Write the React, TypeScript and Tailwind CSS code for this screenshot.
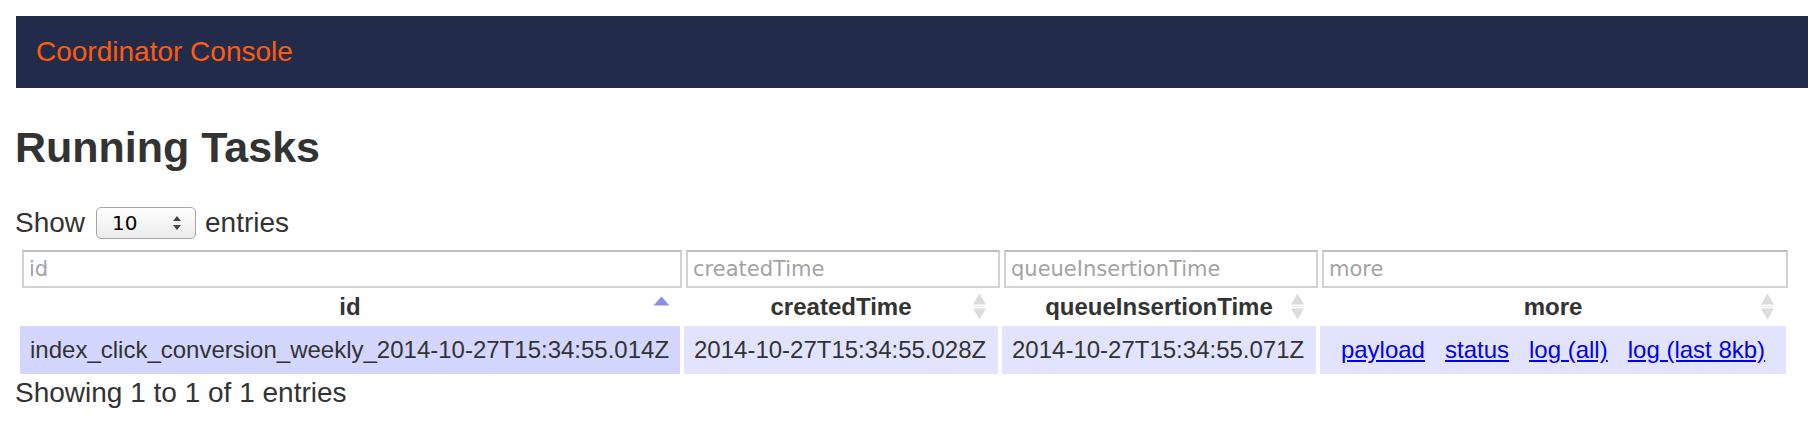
import React from "react";

function SortBoth() {
  return (
    <svg width="17" height="29" viewBox="0 0 17 29" className="absolute right-[10px] top-1/2 -translate-y-1/2">
      <polygon points="8.5,1 15,12 2,12" fill="#dcdcdc" />
      <rect x="3" y="13.5" width="11" height="1.2" fill="#ececec" />
      <polygon points="2,16 15,16 8.5,27" fill="#dcdcdc" />
    </svg>
  );
}

function SortAsc() {
  return (
    <svg width="17" height="29" viewBox="0 0 17 29" className="absolute right-[10px] top-1/2 -translate-y-1/2">
      <polygon points="0.5,13 8.5,4 16.5,13" fill="#8a8ee8" />
    </svg>
  );
}

const inputCls =
  "ml-[2px] block w-full h-[38px] box-border border-2 border-[#d2d2d2] border-t-[#bdbdbd] bg-white pl-[5px] text-[21px] font-['DejaVu_Sans',sans-serif] text-[#333] placeholder:text-[#a3a3a3] outline-none";

export default function App() {
  return (
    <div className="min-h-[438px] bg-white font-['Liberation_Sans',Arial,sans-serif] text-[#333]">
      <div className="pt-[16px] pl-[16px]">
        <div className="h-[72px] bg-[#232b4a] flex items-center pl-[20px]">
          <span className="text-[28px] leading-none text-[#ff5b0f]">Coordinator Console</span>
        </div>
      </div>
      <div className="pl-[15px]">
        <h1 className="mt-[36px] text-[43px] font-bold leading-[46px] text-[#333]">Running Tasks</h1>
        <div className="mt-[36px] flex items-center h-[33px] text-[28px] leading-[32px]">
          <span>Show</span>
          <div className="ml-[11px] mr-[9px] relative w-[100px] h-[32px] rounded-[5px] border border-[#a5a5a5] bg-gradient-to-b from-white to-[#ebebeb] flex items-center pl-[15px] font-['DejaVu_Sans',sans-serif] text-[20px] text-black">
            <span className="leading-none">10</span>
            <svg width="8" height="14" viewBox="0 0 8 14" className="absolute right-[14px] top-1/2 -translate-y-1/2">
              <polygon points="4,0 8,5 0,5" fill="#444" />
              <polygon points="0,9 8,9 4,14" fill="#444" />
            </svg>
          </div>
          <span>entries</span>
        </div>
        <table className="mt-[7px] ml-[1px] table-fixed border-separate border-spacing-1 w-[1774px] text-[24px]">
          <colgroup>
            <col className="w-[660px]" />
            <col className="w-[314px]" />
            <col className="w-[314px]" />
            <col className="w-[466px]" />
          </colgroup>
          <thead>
            <tr>
              <td className="p-0"><input className={inputCls} placeholder="id" /></td>
              <td className="p-0"><input className={inputCls} placeholder="createdTime" /></td>
              <td className="p-0"><input className={inputCls} placeholder="queueInsertionTime" /></td>
              <td className="p-0"><input className={inputCls} placeholder="more" /></td>
            </tr>
            <tr>
              <th className="relative h-[30px] p-0 text-center font-bold leading-[30px]">id<SortAsc /></th>
              <th className="relative h-[30px] p-0 text-center font-bold leading-[30px]">createdTime<SortBoth /></th>
              <th className="relative h-[30px] p-0 text-center font-bold leading-[30px]">queueInsertionTime<SortBoth /></th>
              <th className="relative h-[30px] p-0 text-center font-bold leading-[30px]">more<SortBoth /></th>
            </tr>
          </thead>
          <tbody>
            <tr>
              <td className="h-[48px] bg-[#d3d6ff] px-[10px] py-0 whitespace-nowrap leading-[28px]">index_click_conversion_weekly_2014-10-27T15:34:55.014Z</td>
              <td className="h-[48px] bg-[#e2e4ff] px-[10px] py-0 whitespace-nowrap leading-[28px]">2014-10-27T15:34:55.028Z</td>
              <td className="h-[48px] bg-[#e2e4ff] px-[10px] py-0 whitespace-nowrap leading-[28px]">2014-10-27T15:34:55.071Z</td>
              <td className="h-[48px] bg-[#e2e4ff] px-[10px] py-0 whitespace-nowrap leading-[28px]">
                <div className="flex justify-center gap-[20px]">
                  <a href="#" className="text-[#0000ee] underline">payload</a>
                  <a href="#" className="text-[#0000ee] underline">status</a>
                  <a href="#" className="text-[#0000ee] underline">log (all)</a>
                  <a href="#" className="text-[#0000ee] underline">log (last 8kb)</a>
                </div>
              </td>
            </tr>
          </tbody>
        </table>
        <div className="-mt-[1px] text-[28px] leading-[32px]">Showing 1 to 1 of 1 entries</div>
      </div>
    </div>
  );
}
